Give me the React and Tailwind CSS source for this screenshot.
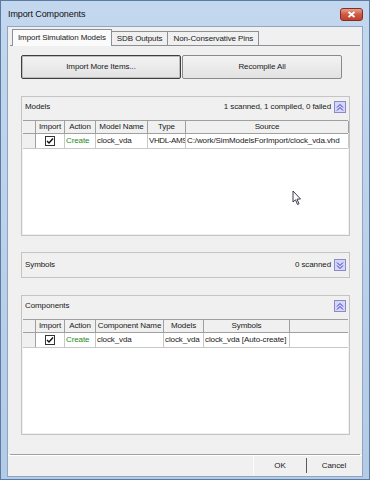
const FONT = "font-['Liberation_Sans',Arial,sans-serif]";

const ChevronBox = ({ up }) => (
  <span className="inline-flex w-[12px] h-[12px] items-center justify-center border border-[#8a8ac6] bg-[#d6d6f5]">
    <svg width="8" height="9" viewBox="0 0 8 9">
      {up ? (
        <path d="M1 4.5 L4 1.5 L7 4.5 M1 7.5 L4 4.5 L7 7.5" stroke="#3434d8" fill="none" strokeWidth="1" />
      ) : (
        <path d="M1 1.5 L4 4.5 L7 1.5 M1 4.5 L4 7.5 L7 4.5" stroke="#3434d8" fill="none" strokeWidth="1" />
      )}
    </svg>
  </span>
);

const Check = () => (
  <span className="inline-flex w-[10px] h-[10px] items-center justify-center border border-[#333] bg-white">
    <svg width="8" height="8" viewBox="0 0 8 8">
      <path d="M1 4 L3 6 L7 1.5" stroke="#111" fill="none" strokeWidth="1.4" />
    </svg>
  </span>
);

const HeadCell = ({ w, children }) => (
  <div className={`${w} h-full shrink-0 border-r border-[#a0a0a0] flex items-center justify-center`}>
    {children}
  </div>
);

const Cell = ({ w, children, className = '' }) => (
  <div className={`${w} h-full shrink-0 border-r border-[#c8c8c8] flex items-center px-[1px] overflow-hidden whitespace-nowrap ${className}`}>
    {children}
  </div>
);

const Grid = ({ cols, row }) => (
  <div className="mx-px mb-px bg-white flex-1 flex flex-col">
    <div className="h-[14px] flex bg-[#f0f0f0] border-t border-b border-[#a0a0a0]">
      <HeadCell w="w-[13px]" />
      {cols.map((c) => (
        <HeadCell key={c.label} w={c.w}>{c.label}</HeadCell>
      ))}
      <div className="flex-1" />
    </div>
    <div className="h-[15px] flex border-b border-[#c8c8c8]">
      <div className="w-[13px] h-full shrink-0 bg-[#f0f0f0] border-r border-[#a0a0a0]" />
      <Cell w={cols[0].w} className="justify-center"><Check /></Cell>
      <Cell w={cols[1].w} className="text-[#1f8a1f]">Create</Cell>
      {row.map((v, i) => (
        <Cell key={i} w={cols[i + 2].w} className={v.tight ? 'tracking-[-0.4px]' : ''}>{v.text}</Cell>
      ))}
    </div>
  </div>
);

const GroupHeader = ({ title, info, up }) => (
  <div className="h-[23px] flex items-center justify-between px-[3px] pb-[3px]">
    <span>{title}</span>
    <span className="flex items-center gap-[3px]">
      {info && <span>{info}</span>}
      <ChevronBox up={up} />
    </span>
  </div>
);

export default function App() {
  return (
    <div className={`${FONT} relative w-[370px] h-[480px] text-[8px] tracking-[-0.1px] text-[#1a1a1a] bg-gradient-to-b from-[#c3d7ee] to-[#b4cbe6] border border-[#5b7ba3] flex flex-col`}>
      {/* Title bar */}
      <div className="h-[25px] flex items-center justify-between pl-[7px] pr-[6px]">
        <span className="text-[9px] text-[#111] mt-[2px]">Import Components</span>
        <button className="w-[23px] h-[13px] mt-[1px] rounded-[3px] border border-[#8b2a1f] bg-gradient-to-b from-[#e3a08f] via-[#cf5a44] to-[#c0412c] flex items-center justify-center">
          <svg width="9" height="7" viewBox="0 0 9 7">
            <path d="M1.5 1 L7.5 6 M7.5 1 L1.5 6" stroke="#fff" strokeWidth="1.8" />
          </svg>
        </button>
      </div>

      {/* Client area */}
      <div className="flex-1 mx-[6px] mb-[2px] bg-[#f0f0f0] border border-[#8ea6c4] flex flex-col">
        {/* Tabs */}
        <div className="h-[18px] flex items-end pl-[4px]">
          <div className="h-[17px] px-[5px] flex items-center bg-[#fbfbfb] border-l border-t border-r border-[#8c8f96] -mb-px relative z-10">
            Import Simulation Models
          </div>
          <div className="h-[14px] px-[5px] flex items-center border-r border-t border-[#8c8f96]">SDB Outputs</div>
          <div className="h-[14px] px-[5px] flex items-center border-r border-t border-[#8c8f96]">Non-Conservative Pins</div>
        </div>

        {/* Tab panel */}
        <div className="h-[410px] mx-[2px] border-t border-[#8c8f96] border-b-[#a0a0a0] border-b flex flex-col pl-[11px] pr-[10px]">
          <div className="mt-[9px] flex">
            <button className="w-[160px] h-[24px] rounded-[2px] border border-[#3f3f3f] shadow-[inset_0_0_0_1px_#bdbdbd] bg-gradient-to-b from-[#f3f3f3] to-[#e2e2e2]">
              Import More Items...
            </button>
            <button className="w-[160px] h-[24px] ml-px rounded-[2px] border border-[#8a8a8a] bg-gradient-to-b from-[#f3f3f3] to-[#e2e2e2]">
              Recompile All
            </button>
          </div>

          {/* Models */}
          <div className="mt-[17px] h-[140px] border border-[#c4c4c4] flex flex-col">
            <GroupHeader title="Models" info="1 scanned, 1 compiled, 0 failed" up />
            <Grid
              cols={[
                { label: 'Import', w: 'w-[29px]' },
                { label: 'Action', w: 'w-[31px]' },
                { label: 'Model Name', w: 'w-[52px]' },
                { label: 'Type', w: 'w-[38px]' },
                { label: 'Source', w: 'w-[163px]' },
              ]}
              row={[
                { text: 'clock_vda' },
                { text: 'VHDL-AMS', tight: true },
                { text: 'C:/work/SimModelsForImport/clock_vda.vhd' },
              ]}
            />
          </div>

          {/* Symbols */}
          <div className="mt-[16px] h-[26px] border border-[#c4c4c4] flex flex-col">
            <div className="h-full flex items-center justify-between px-[3px]">
              <span>Symbols</span>
              <span className="flex items-center gap-[3px]">
                <span>0 scanned</span>
                <ChevronBox />
              </span>
            </div>
          </div>

          {/* Components */}
          <div className="mt-[17px] h-[140px] border border-[#c4c4c4] flex flex-col">
            <GroupHeader title="Components" up />
            <Grid
              cols={[
                { label: 'Import', w: 'w-[29px]' },
                { label: 'Action', w: 'w-[31px]' },
                { label: 'Component Name', w: 'w-[68px]' },
                { label: 'Models', w: 'w-[40px]' },
                { label: 'Symbols', w: 'w-[86px]' },
              ]}
              row={[
                { text: 'clock_vda' },
                { text: 'clock_vda' },
                { text: 'clock_vda [Auto-create]' },
              ]}
            />
          </div>
        </div>

        {/* Footer */}
        <div className="flex-1 flex items-end justify-end border-t border-white pb-px pr-px">
          <button className="w-[53px] h-[19px] border-l border-[#fcfcfc] flex items-center justify-center">OK</button>
          <div className="w-px h-[15px] mb-[2px] bg-[#5a5a5a]" />
          <button className="w-[54px] h-[19px] flex items-center justify-center">Cancel</button>
        </div>
      </div>

      {/* Mouse pointer */}
      <svg className="absolute left-[291px] top-[189px]" width="10" height="16" viewBox="0 0 10 16">
        <path d="M1 1 L1 12 L3.5 9.8 L5.5 14.5 L7 13.8 L5 9.2 L8.5 9 Z" fill="#fff" stroke="#3a3a4a" strokeWidth="1" strokeLinejoin="round" />
      </svg>
    </div>
  );
}
